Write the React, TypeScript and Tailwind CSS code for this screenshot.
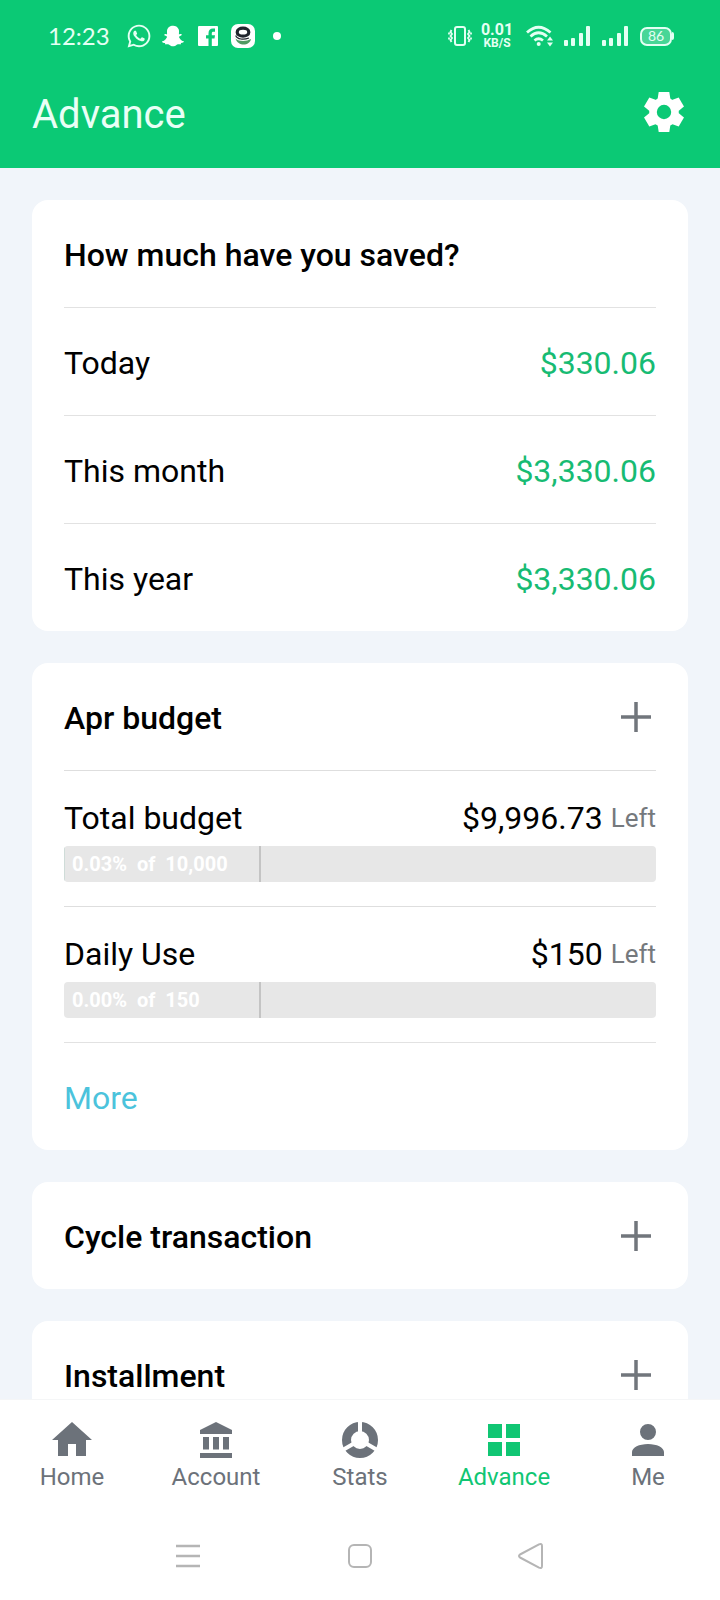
import React from "react";
import { FaWhatsapp, FaSnapchatGhost } from "react-icons/fa";

const savings = [
  { label: "Today", value: "$330.06" },
  { label: "This month", value: "$3,330.06" },
  { label: "This year", value: "$3,330.06" },
];

const budgets = [
  { label: "Total budget", left: "$9,996.73", percent: 0.03, caption: "0.03%  of  10,000" },
  { label: "Daily Use", left: "$150", percent: 0, caption: "0.00%  of  150" },
];

function SignalBars() {
  return (
    <svg width="26" height="20" viewBox="0 0 26 20" fill="currentColor" aria-hidden="true">
      <rect x="0" y="14" width="4" height="6" rx="1" />
      <rect x="7" y="12" width="4" height="8" rx="1" />
      <rect x="15" y="7" width="4" height="13" rx="1" />
      <rect x="22" y="0" width="4" height="20" rx="1" />
    </svg>
  );
}

function GearIcon() {
  return (
    <svg width="48" height="48" viewBox="0 0 48 48" fill="currentColor" aria-hidden="true">
      <circle cx="24" cy="24" r="11" fill="none" stroke="currentColor" strokeWidth="7.600" />
      {[0, 60, 120, 180, 240, 300].map((angle) => (
        <path key={angle} d="M18.700 4h10.600l1 6.500-1 3h-10.600l-1-3z" transform={`rotate(${angle} 24 24)`} />
      ))}
    </svg>
  );
}

function StatusBar() {
  return (
    <div className="flex h-[72px] items-center justify-between pr-[46px] pl-12 text-[#e4fff3]">
      <div className="flex items-center">
        <span className="w-[62px] font-['Lato',sans-serif] text-2xl leading-6">12:23</span>
        <FaWhatsapp className="ml-4 size-[26px]" aria-hidden="true" />
        <FaSnapchatGhost className="ml-[10px] size-[22px] text-white" aria-hidden="true" />
        <svg className="ml-[14px]" width="20" height="20" viewBox="0 0 20 20" aria-hidden="true">
          <rect width="20" height="20" rx="1" fill="#fff" />
          <path d="M10.500 20v-7.500H8V9.300h2.500V7.200c0-3 1.600-4.700 4.500-4.700h2v3.200h-1.600c-1.200 0-1.600.6-1.600 1.700v1.900H17l-.5 3.200h-2.700V20z" fill="#0bc975" />
        </svg>
        <svg className="ml-3" width="26" height="26" viewBox="0 0 26 26" aria-hidden="true">
          <rect x="1" y="1" width="24" height="24" rx="7" fill="#fff" />
          <ellipse cx="13" cy="9.200" rx="5.800" ry="4" fill="none" stroke="#20252d" strokeWidth="3.200" />
          <path d="M5.500 15.500c4 3.500 11 3 15.500.5-1 7-13 8-15.500-.5z" fill="#4f9a62" />
          <path d="M5.700 12.500c1.500 4 8 4.500 13.300 2.500" fill="none" stroke="#20252d" strokeWidth="1.200" />
        </svg>
        <span className="ml-[17px] size-2 rounded-full bg-white" />
      </div>
      <div className="flex items-center">
        <svg width="24" height="20" viewBox="0 0 24 20" fill="none" stroke="currentColor" strokeWidth="2" aria-hidden="true">
          <rect x="7" y="1" width="10" height="18" rx="2" />
          <path d="M3.500 4L2.500 6l1.500 2-1.500 2L4 12l-1.500 2 1 2M1 6.500v2M1 11.500v2M20.500 4l1 2L20 8l1.500 2-1.500 2 1.500 2-1 2M23 6.500v2M23 11.500v2" strokeWidth="1.800" />
        </svg>
        <div className="ml-[9px] flex w-8 flex-col items-center font-bold">
          <span className="text-base leading-[14px]">0.01</span>
          <span className="text-xs leading-3">KB/S</span>
        </div>
        <svg className="ml-[13px]" width="28" height="22" viewBox="0 0 28 22" fill="none" stroke="currentColor" aria-hidden="true">
          <path d="M1 7.500Q12.500-3 24.500 7.500" strokeWidth="2.800" />
          <path d="M4.500 11.500q8-7.500 16.500 0" strokeWidth="2.800" />
          <path d="M8.500 15.500q4-3.500 8.500 0" strokeWidth="2.800" />
          <circle cx="12.700" cy="19" r="2" fill="currentColor" stroke="none" />
          <path d="M21 15.500l3-4 3 4zM21 17.500l3 4 3-4z" fill="currentColor" stroke="none" />
        </svg>
        <div className="ml-[10px] flex gap-3">
          <SignalBars />
          <SignalBars />
        </div>
        <div className="ml-3 flex items-center">
          <span className="flex h-[19px] w-8 items-center justify-center rounded-[7px] border-2 border-current bg-white/25 font-['Lato',sans-serif] text-sm leading-none">86</span>
          <span className="h-2 w-[2px] rounded-r-full bg-current" />
        </div>
      </div>
    </div>
  );
}

function AddButton({ label }: { label: string }) {
  return (
    <button type="button" aria-label={label} className="text-[#71767c]">
      <svg width="40" height="40" viewBox="0 0 40 40" fill="none" stroke="currentColor" strokeWidth="3.500" aria-hidden="true">
        <path d="M20 5v30M5 20h30" />
      </svg>
    </button>
  );
}

function Card({ children }: { children: React.ReactNode }) {
  return <section className="rounded-2xl bg-white px-8">{children}</section>;
}

function CardHeader({ title, add }: { title: string; add?: boolean }) {
  return (
    <div className="flex h-[107px] items-center justify-between">
      <h2 className="pt-0.5 text-[32px] leading-10 font-medium">{title}</h2>
      {add && <AddButton label={"Add " + title} />}
    </div>
  );
}

const tabs = [
  {
    label: "Home",
    icon: <path d="M20 40V28h8v12h10V24h6L24 6 4 24h6v16z" />,
  },
  {
    label: "Account",
    icon: <path d="M24 6L8 14v4h32v-4zM11 21h6v12.500h-6zM21 21h6v12.500h-6zM31 21h6v12.500h-6zM8 37h32v5H8z" />,
  },
  {
    label: "Stats",
    icon: (
      <g fill="none" stroke="currentColor">
        <circle cx="24" cy="24" r="13.500" strokeWidth="9" />
        <path d="M24 24V4M24 24l17.300 10M24 24L6.700 34" stroke="#fff" strokeWidth="4" />
      </g>
    ),
  },
  {
    label: "Advance",
    active: true,
    icon: <path d="M8 8h14v14H8zM26 8h14v14H26zM8 26h14v14H8zM26 26h14v14H26z" />,
  },
  {
    label: "Me",
    icon: <path d="M24 8a8 8 0 1 1 0 16 8 8 0 0 1 0-16zM24 28c8.840 0 16 3.580 16 8v4H8v-4c0-4.420 7.160-8 16-8z" />,
  },
];

export default function App() {
  return (
    <div className="flex h-dvh flex-col overflow-hidden bg-[#f1f5fa] font-['Roboto',sans-serif] text-black">
      <header className="shrink-0 bg-[#0bc975]">
        <StatusBar />
        <div className="flex h-24 items-start justify-between px-8 pt-4 text-white">
          <h1 className="text-[40px] leading-[54px] font-normal text-[#e9fff6]">Advance</h1>
          <button type="button" aria-label="Settings">
            <GearIcon />
          </button>
        </div>
      </header>

      <main className="flex min-h-0 flex-1 flex-col gap-8 overflow-y-auto p-8 [scrollbar-width:none]">
        <Card>
          <CardHeader title="How much have you saved?" />
          <dl>
            {savings.map((row) => (
              <div key={row.label} className="flex h-[108px] items-center justify-between border-t border-[#e2e2e2] pt-0.5 text-[32px] leading-10">
                <dt>{row.label}</dt>
                <dd className="text-[#17bb73]">{row.value}</dd>
              </div>
            ))}
          </dl>
        </Card>

        <Card>
          <CardHeader title="Apr budget" add />
          {budgets.map((b) => (
            <div key={b.label} className="border-t border-[#dedede] pt-[27px] pb-6">
              <div className="flex items-center justify-between text-[32px] leading-10">
                <span>{b.label}</span>
                <span className="flex items-center gap-2">
                  {b.left}
                  <span className="text-[26px] leading-9 text-[#75797d]">Left</span>
                </span>
              </div>
              <div
                role="progressbar"
                aria-label={b.label}
                aria-valuenow={b.percent}
                aria-valuemin={0}
                aria-valuemax={100}
                className="relative mt-2 flex h-9 items-center overflow-hidden rounded-sm bg-[#e7e7e7] px-2"
              >
                {b.percent > 0 && <span className="absolute inset-y-0 left-0 w-px bg-[#cfdcd8]" />}
                <span className="absolute inset-y-0 left-[33%] w-[2px] bg-[#c4c4c4]" />
                <span className="text-xl font-bold whitespace-pre text-white">{b.caption}</span>
              </div>
            </div>
          ))}
          <div className="flex h-[108px] items-center border-t border-[#e2e2e2] pt-0.5">
            <a href="#more" className="text-[32px] leading-10 text-[#4bc3dc]">More</a>
          </div>
        </Card>

        <Card>
          <CardHeader title="Cycle transaction" add />
        </Card>

        <Card>
          <CardHeader title="Installment" add />
        </Card>
      </main>

      <footer className="shrink-0 border-t border-[#f5f6f7] bg-white">
        <nav className="grid h-28 grid-cols-5 pt-4">
          {tabs.map((tab) => (
            <a
              key={tab.label}
              href={"#" + tab.label.toLowerCase()}
              aria-current={tab.active ? "page" : undefined}
              className={tab.active ? "flex flex-col items-center text-[#10c673]" : "flex flex-col items-center text-[#6c727a]"}
            >
              <svg width="48" height="48" viewBox="0 0 48 48" fill="currentColor" aria-hidden="true">
                {tab.icon}
              </svg>
              <span className="text-2xl leading-[26px]">{tab.label}</span>
            </a>
          ))}
        </nav>
        <div className="flex h-[88px] items-start justify-center gap-[132px] pt-6 text-[#b5b5b5]">
          <button type="button" aria-label="Recent apps">
            <svg width="40" height="40" viewBox="0 0 40 40" fill="none" stroke="currentColor" strokeWidth="2.500" aria-hidden="true">
              <path d="M8 10h24M8 20h24M8 30h24" />
            </svg>
          </button>
          <button type="button" aria-label="Home screen">
            <svg width="40" height="40" viewBox="0 0 40 40" fill="none" stroke="currentColor" strokeWidth="2" aria-hidden="true">
              <rect x="9" y="9" width="22" height="22" rx="5" />
            </svg>
          </button>
          <button type="button" aria-label="Back">
            <svg width="40" height="40" viewBox="0 0 40 40" fill="none" stroke="currentColor" strokeWidth="2" strokeLinejoin="round" aria-hidden="true">
              <path d="M8 18.500L27 8.300Q30 7 30 10V30Q30 33 27 31.700L8 21.500Q6 20 8 18.500z" />
            </svg>
          </button>
        </div>
      </footer>
    </div>
  );
}
